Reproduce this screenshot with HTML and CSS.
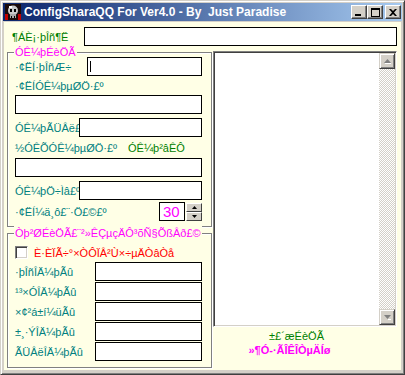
FILE: index.html
```html
<!DOCTYPE html>
<html lang="en">
<head>
    <meta charset="UTF-8">
    <title>ConfigSharaQQ For Ver4.0</title>
    <link rel="stylesheet" href="styles.css">
</head>
<body>
    <div class="window">
        <div class="titlebar">
            <svg class="appicon" width="16" height="16" viewBox="0 0 16 16">
                <rect x="0" y="0" width="16" height="16" fill="#1a0a0a"/>
                <path d="M0 10h3v6H0zM13 10h3v6h-3z" fill="#c00000"/>
                <ellipse cx="8" cy="6.5" rx="5" ry="5" fill="#c8c8c8"/>
                <rect x="5" y="10" width="6" height="4" fill="#a8a8a8"/>
                <rect x="5" y="5" width="2" height="3" fill="#000"/>
                <rect x="9" y="5" width="2" height="3" fill="#000"/>
                <rect x="6" y="12" width="1" height="2" fill="#000"/>
                <rect x="9" y="12" width="1" height="2" fill="#000"/>
                <rect x="4" y="2" width="3" height="2" fill="#fff"/>
            </svg>
            <span class="title">ConfigSharaQQ For Ver4.0 - By&nbsp; Just Paradise</span>
            <div class="capbtns">
                <span class="capbtn"><svg width="8" height="7" viewBox="0 0 8 7"><rect x="0" y="5" width="6" height="2" fill="#000"/></svg></span>
                <span class="capbtn"><svg width="9" height="9" viewBox="0 0 9 9"><path d="M0 0h9v9H0z M1 2v6h7V2z" fill="#000" fill-rule="evenodd"/></svg></span>
                <span class="capbtn close"><svg width="8" height="7" viewBox="0 0 8 7"><path d="M0 0h2l2 2 2-2h2L5 3.5 8 7H6L4 5 2 7H0l3-3.5z" fill="#000"/></svg></span>
            </div>
        </div>

        <div class="client">
            <div class="toprow">
                <span class="lbl green toplbl">¶ÁÈ¡·þÎñ¶Ë</span>
                <div class="edit topedit"></div>
            </div>

            <div class="main">
                <div class="leftcol">
                    <div class="group mailgroup">
                        <span class="legend magenta">ÓÊ¼þÉèÖÃ</span>
                        <div class="row">
                            <span class="lbl w72">·¢ËÍ·þÎñÆ÷</span>
                            <div class="edit grow"><span class="caret"></span></div>
                        </div>
                        <div class="lblrow"><span class="lbl">·¢ËÍÓÊ¼þµØÖ·£º</span></div>
                        <div class="edit"></div>
                        <div class="row gap4">
                            <span class="lbl w64">ÓÊ¼þÃÜÂë£</span>
                            <div class="edit grow"></div>
                        </div>
                        <div class="lblrow tall">
                            <span class="lbl w113">½ÓÊÕÓÊ¼þµØÖ·£º</span>
                            <span class="lbl green">ÓÊ¼þ²âÊÔ</span>
                        </div>
                        <div class="edit"></div>
                        <div class="row gap4">
                            <span class="lbl w64">ÓÊ¼þÖ÷Ìâ£º</span>
                            <div class="edit grow"></div>
                        </div>
                        <div class="row gap2">
                            <span class="lbl grow">·¢ËÍ¼ä¸ô£¨·Ö£©£º</span>
                            <div class="spinedit">30</div>
                            <div class="spinbtns">
                                <span class="spinbtn"><svg width="5" height="3" viewBox="0 0 5 3"><path d="M2.5 0L5 3H0z" fill="#000"/></svg></span>
                                <span class="spinbtn"><svg width="5" height="3" viewBox="0 0 5 3"><path d="M0 0h5L2.5 3z" fill="#000"/></svg></span>
                            </div>
                        </div>
                    </div>

                    <div class="group hidegroup">
                        <span class="legend magenta">Òþ²ØÉèÖÃ£¨²»ÊÇµçÄÔ³õÑ§ÕßÂð£©</span>
                        <div class="checkrow">
                            <span class="checkbox"></span>
                            <span class="lbl red">È·ÈÏÃ÷°×ÒÔÏÂ²Ù×÷µÄÒâÒå</span>
                        </div>
                        <div class="row gap1">
                            <span class="lbl w80">·þÎñÎÄ¼þÃû</span>
                            <div class="edit grow"></div>
                        </div>
                        <div class="row gap1">
                            <span class="lbl w80">¹³×ÓÎÄ¼þÃû</span>
                            <div class="edit grow"></div>
                        </div>
                        <div class="row gap1">
                            <span class="lbl w80">×¢²á±í¼üÃû</span>
                            <div class="edit grow"></div>
                        </div>
                        <div class="row gap1">
                            <span class="lbl w80">±¸·ÝÎÄ¼þÃû</span>
                            <div class="edit grow"></div>
                        </div>
                        <div class="row gap1">
                            <span class="lbl w80">ÃÜÂëÎÄ¼þÃû</span>
                            <div class="edit grow"></div>
                        </div>
                    </div>
                </div>

                <div class="rightcol">
                    <div class="listbox">
                        <div class="listarea"></div>
                        <div class="vscroll">
                            <span class="sbtn"><svg width="7" height="5" viewBox="0 0 7 5"><path d="M3.5 0L7 4H0z" fill="#808080"/><path d="M1 4h6v1H1z" fill="#fff"/></svg></span>
                            <span class="track"></span>
                            <span class="sbtn"><svg width="7" height="5" viewBox="0 0 7 5"><path d="M0 0h7L3.5 4z" fill="#808080"/><path d="M4 4h3v1H4z" fill="#fff"/></svg></span>
                        </div>
                    </div>
                    <div class="savelbl green">±£´æÉèÖÃ</div>
                    <div class="welcome magenta">»¶Ó-·ÃÎÊÎÒµÄÍø</div>
                </div>
            </div>
        </div>
    </div>
</body>
</html>
```

FILE: styles.css
```css
body {
    margin: 0;
    font-family: "Liberation Sans", Arial, sans-serif;
    font-size: 11px;
}

.window {
    width: 405px;
    height: 375px;
    box-sizing: border-box;
    display: flex;
    flex-direction: column;
    background-color: #d4d0c8;
    border: 1px solid;
    border-color: #d4d0c8 #404040 #404040 #d4d0c8;
    box-shadow: inset 1px 1px 0 #fff, inset -1px -1px 0 #808080;
    padding: 2px 3px 4px 3px;
}

/* title bar */
.titlebar {
    height: 18px;
    margin: 0 -1px;
    padding: 0 1px 0 2px;
    display: flex;
    align-items: center;
    background: linear-gradient(to right, #0a246a, #a6caf0);
}

.appicon {
    display: block;
    flex: none;
}

.title {
    margin-left: 3px;
    flex: 1;
    color: #fff;
    font-weight: bold;
    font-size: 12px;
    white-space: nowrap;
}

.capbtns {
    display: flex;
}

.capbtn {
    width: 16px;
    height: 14px;
    box-sizing: border-box;
    display: flex;
    align-items: center;
    justify-content: center;
    background-color: #d4d0c8;
    border: 1px solid;
    border-color: #fff #404040 #404040 #fff;
    box-shadow: inset -1px -1px 0 #808080;
}

    .capbtn.close {
        margin-left: 2px;
    }

/* client area */
.client {
    flex: 1;
    margin-top: 1px;
    background-color: #ffffe6;
}

.toprow {
    display: flex;
    align-items: center;
    margin-top: 5px;
    padding-left: 8px;
}

.toplbl {
    width: 72px;
}

.topedit {
    width: 313px;
}

.main {
    display: flex;
    margin-top: 5px;
    padding-left: 3px;
}

.lbl {
    color: #008080;
    white-space: nowrap;
}

.green { color: #008000; }
.magenta { color: #ff00ff; }
.red { color: #ff0000; }

.edit {
    height: 19px;
    box-sizing: border-box;
    background-color: #fff;
    border: 1px solid #000;
    display: flex;
    align-items: center;
}

.caret {
    width: 1px;
    height: 11px;
    margin-left: 2px;
    background-color: #000;
}

.grow { flex: 1; }
.w64 { width: 64px; }
.w72 { width: 72px; }
.w80 { width: 80px; }
.w113 { width: 113px; }

/* group boxes */
.group {
    position: relative;
    width: 205px;
    box-sizing: border-box;
    border: 1px solid #808080;
    box-shadow: 1px 1px 0 #fff, inset 1px 1px 0 #fff;
}

.legend {
    position: absolute;
    top: -8px;
    left: 6px;
    padding: 0 1px;
    line-height: 14px;
    background-color: #ffffe6;
    white-space: nowrap;
}

.mailgroup {
    margin-top: 1px;
    padding: 4px 9px 5px 7px;
}

.hidegroup {
    margin-top: 6px;
    padding: 10px 9px 6px 7px;
}

.row {
    display: flex;
    align-items: center;
    height: 19px;
}

.gap1 { margin-top: 1px; }
.gap2 { margin-top: 2px; }
.gap4 { margin-top: 4px; }

.lblrow {
    display: flex;
    align-items: center;
    height: 19px;
}

    .lblrow.tall {
        height: 21px;
    }

.spinedit {
    width: 26px;
    height: 19px;
    box-sizing: border-box;
    border: 1px solid #000;
    background-color: #fff;
    color: #ff00ff;
    font-size: 15px;
    line-height: 17px;
    padding-left: 3px;
}

.spinbtns {
    display: flex;
    flex-direction: column;
    margin-left: 1px;
    height: 18px;
}

.spinbtn {
    width: 16px;
    height: 9px;
    box-sizing: border-box;
    display: flex;
    align-items: center;
    justify-content: center;
    background-color: #d4d0c8;
    border: 1px solid;
    border-color: #fff #404040 #404040 #fff;
}

.checkrow {
    display: flex;
    align-items: center;
    height: 17px;
}

.checkbox {
    width: 13px;
    height: 13px;
    box-sizing: border-box;
    margin-right: 6px;
    background-color: #fff;
    border: 1px solid;
    border-color: #808080 #fff #fff #808080;
    box-shadow: inset 1px 1px 0 #404040, inset -1px -1px 0 #d4d0c8;
}

/* right column */
.rightcol {
    width: 184px;
    margin-left: 1px;
}

.listbox {
    height: 276px;
    box-sizing: border-box;
    display: flex;
    background-color: #fff;
    border: 1px solid;
    border-color: #808080 #fff #fff #808080;
    box-shadow: inset 1px 1px 0 #404040, inset -1px -1px 0 #d4d0c8;
    padding: 1px;
}

.listarea {
    flex: 1;
}

.vscroll {
    width: 16px;
    display: flex;
    flex-direction: column;
}

.sbtn {
    width: 16px;
    height: 16px;
    box-sizing: border-box;
    display: flex;
    align-items: center;
    justify-content: center;
    background-color: #d4d0c8;
    border: 1px solid;
    border-color: #d4d0c8 #404040 #404040 #d4d0c8;
    box-shadow: inset 1px 1px 0 #fff, inset -1px -1px 0 #808080;
}

.track {
    flex: 1;
    background: repeating-conic-gradient(#d4d0c8 0 25%, #fff 0 50%) 0 0 / 2px 2px;
}

.savelbl {
    margin-top: 2px;
    line-height: 14px;
    text-align: center;
    padding-right: 17px;
}

.welcome {
    line-height: 14px;
    text-align: center;
    padding-right: 31px;
    font-weight: bold;
}
```
